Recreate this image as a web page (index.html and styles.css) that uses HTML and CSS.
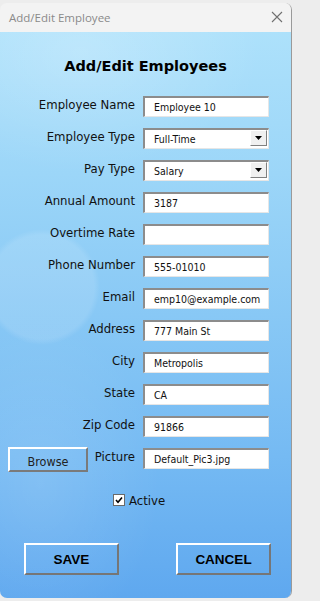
FILE: index.html
```html
<!DOCTYPE html>
<html>
<head>
<meta charset="utf-8">
<link rel="stylesheet" href="styles.css">
</head>
<body>
<div class="window">
  <div class="titlebar">
    <span class="wtitle">Add/Edit Employee</span>
    <svg class="close" width="12" height="12" viewBox="0 0 12 12"><path d="M1 1 L11 11 M11 1 L1 11" stroke="#707070" stroke-width="1.1" fill="none"/></svg>
  </div>
  <div class="client">
    <h1 class="heading">Add/Edit Employees</h1>
    <div class="form">
      <label class="lbl">Employee Name</label>
      <div class="field"><span class="val">Employee 10</span></div>

      <label class="lbl">Employee Type</label>
      <div class="field combo"><span class="val">Full-Time</span><span class="drop"><svg width="7" height="4" viewBox="0 0 7 4"><path d="M0 0 H7 L3.5 4 Z" fill="#000"/></svg></span></div>

      <label class="lbl">Pay Type</label>
      <div class="field combo"><span class="val">Salary</span><span class="drop"><svg width="7" height="4" viewBox="0 0 7 4"><path d="M0 0 H7 L3.5 4 Z" fill="#000"/></svg></span></div>

      <label class="lbl">Annual Amount</label>
      <div class="field"><span class="val">3187</span></div>

      <label class="lbl">Overtime Rate</label>
      <div class="field"><span class="val"></span></div>

      <label class="lbl">Phone Number</label>
      <div class="field"><span class="val">555-01010</span></div>

      <label class="lbl">Email</label>
      <div class="field"><span class="val">emp10@example.com</span></div>

      <label class="lbl">Address</label>
      <div class="field"><span class="val">777 Main St</span></div>

      <label class="lbl">City</label>
      <div class="field"><span class="val">Metropolis</span></div>

      <label class="lbl">State</label>
      <div class="field"><span class="val">CA</span></div>

      <label class="lbl">Zip Code</label>
      <div class="field"><span class="val">91866</span></div>

      <div class="lbl pic">
        <div class="browse"><span class="browse-txt">Browse</span></div>
        <span>Picture</span>
      </div>
      <div class="field"><span class="val">Default_Pic3.jpg</span></div>
    </div>

    <div class="active">
      <span class="check"><svg width="8" height="8" viewBox="0 0 8 8"><path d="M1 4 L3 6.2 L7 1.5" stroke="#000" stroke-width="1.6" fill="none"/></svg></span>
      <span class="active-txt">Active</span>
    </div>

    <div class="actions">
      <div class="btn">SAVE</div>
      <div class="btn">CANCEL</div>
    </div>
  </div>
</div>
</body>
</html>
```
FILE: styles.css
```css
html, body {
  margin: 0;
  padding: 0;
}
body {
  background: #ededed;
  width: 293px;
  height: 601px;
  overflow: hidden;
  font-family: "DejaVu Sans Condensed", "DejaVu Sans", sans-serif;
}
.window {
  margin-top: 3px;
  width: 291px;
  height: 595px;
  border-right: 1px solid #9a9a9a;
  border-radius: 7px;
  overflow: hidden;
  display: flex;
  flex-direction: column;
}
.titlebar {
  height: 29px;
  background: #f3f3f3;
  display: flex;
  align-items: center;
  justify-content: space-between;
  padding: 0 8px 0 9px;
  flex: none;
}
.wtitle {
  font-family: "Open Sans", sans-serif;
  font-size: 11.5px;
  color: #8a8a8a;
  margin-top: -1px;
}
.close {
  margin-top: -2px;
}
.client {
  flex: 1;
  padding: 25px 0 0 8px;
  background:
    radial-gradient(circle at 42px 255px, rgba(255,255,255,0.12) 0, rgba(255,255,255,0.12) 52px, rgba(255,255,255,0) 58px),
    radial-gradient(ellipse 180px 120px at 80px 20px, rgba(255,255,255,0.22), rgba(255,255,255,0) 100%),
    radial-gradient(ellipse 120px 160px at 40px 450px, rgba(255,255,255,0.12), rgba(255,255,255,0) 100%),
    linear-gradient(180deg, #ade1fb 0%, #9cd6f8 25%, #88c8f5 50%, #75baf3 75%, #5fa8ef 100%);
}
.heading {
  margin: 0 0 21px -8px;
  text-align: center;
  font-family: "DejaVu Sans", sans-serif;
  font-weight: bold;
  font-size: 14.5px;
  line-height: 18px;
  color: #000;
}
.form {
  display: grid;
  grid-template-columns: 127px 126px;
  grid-auto-rows: 21px;
  column-gap: 8px;
  row-gap: 11px;
}
.lbl {
  text-align: right;
  font-size: 13px;
  line-height: 18px;
  color: #111;
  white-space: nowrap;
}
.lbl.pic {
  display: flex;
  justify-content: space-between;
  align-items: flex-start;
}
.field {
  box-sizing: border-box;
  height: 21px;
  background: #fff;
  border-top: 2px solid #8c8c8c;
  border-left: 2px solid #8c8c8c;
  border-bottom: 1px solid #e6e6e6;
  border-right: 1px solid #e6e6e6;
  display: flex;
  align-items: stretch;
}
.val {
  padding-left: 9px;
  font-size: 10.5px;
  line-height: 18px;
  color: #111;
  flex: 1;
  white-space: nowrap;
}
.combo .drop {
  width: 17px;
  height: 16px;
  margin: 0 1px 0 0;
  box-sizing: border-box;
  background: #f0f0f0;
  border-top: 1px solid #fff;
  border-left: 1px solid #fff;
  border-right: 1px solid #808080;
  border-bottom: 1px solid #808080;
  display: flex;
  align-items: center;
  justify-content: center;
}
.browse {
  box-sizing: border-box;
  width: 80px;
  height: 25px;
  margin-top: -1px;
  border-top: 2px solid #fff;
  border-left: 2px solid #fff;
  border-right: 2px solid #7a7a7a;
  border-bottom: 2px solid #7a7a7a;
  text-align: center;
  padding-top: 6px;
}
.browse-txt {
  display: block;
  font-size: 12.5px;
  line-height: 14px;
  color: #222;
}
.active {
  margin: 25px 0 0 105px;
  display: flex;
  align-items: center;
  gap: 4px;
  height: 12px;
}
.check {
  box-sizing: border-box;
  width: 12px;
  height: 12px;
  background: #fff;
  border: 1px solid #6a6a6a;
  display: flex;
  align-items: center;
  justify-content: center;
}
.active-txt {
  font-size: 13px;
  line-height: 12px;
  color: #111;
  margin-top: 1px;
}
.actions {
  margin: 37px 0 0 16px;
  display: flex;
  gap: 57px;
}
.btn {
  box-sizing: border-box;
  width: 95px;
  height: 32px;
  border-top: 2px solid #fff;
  border-left: 2px solid #fff;
  border-right: 2px solid #767676;
  border-bottom: 2px solid #767676;
  display: flex;
  align-items: center;
  justify-content: center;
  font-family: "Liberation Sans", sans-serif;
  font-weight: bold;
  font-size: 13.5px;
  color: #000;
}
```
